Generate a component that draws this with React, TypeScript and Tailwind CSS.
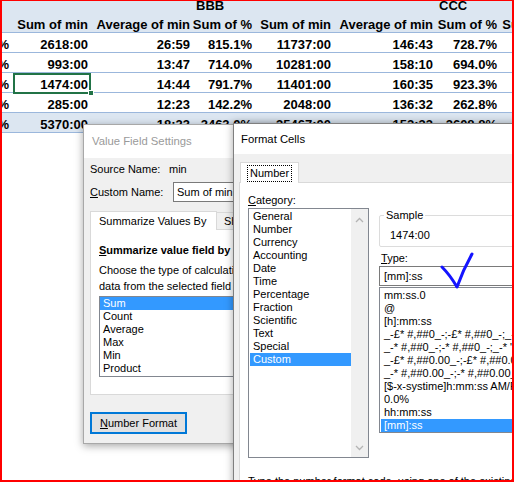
import React from "react";

// column widths of the pivot table, left to right
const cols = [
  "w-[12px]",
  "w-[79px]",
  "w-[102px]",
  "w-[62px]",
  "w-[79px]",
  "w-[102px]",
  "w-[64px]",
  "w-[76px]",
];

const heads = ["", "Sum of min", "Average of min", "Sum of %", "Sum of min", "Average of min", "Sum of %", "Sum of min"];

const rows = [
  ["%", "2618:00", "26:59", "815.1%", "11737:00", "146:43", "728.7%", ""],
  ["%", "993:00", "13:47", "714.0%", "10281:00", "158:10", "694.0%", ""],
  ["%", "1474:00", "14:44", "791.7%", "11401:00", "160:35", "923.3%", ""],
  ["%", "285:00", "12:23", "142.2%", "2048:00", "136:32", "262.8%", ""],
];

const total = ["%", "5370:00", "18:23", "2463.0%", "35467:00", "152:33", "2608.8%", ""];

const calcs = ["Sum", "Count", "Average", "Max", "Min", "Product"];

const categories = [
  "General",
  "Number",
  "Currency",
  "Accounting",
  "Date",
  "Time",
  "Percentage",
  "Fraction",
  "Scientific",
  "Text",
  "Special",
  "Custom",
];

const formats = [
  "mm:ss.0",
  "@",
  "[h]:mm:ss",
  '_-£* #,##0_-;-£* #,##0_-;_-£* "-"_-;_-@_-',
  '_-* #,##0_-;-* #,##0_-;_-* "-"_-;_-@_-',
  '_-£* #,##0.00_-;-£* #,##0.00_-;_-£* "-"??_-;_-@_-',
  '_-* #,##0.00_-;-* #,##0.00_-;_-* "-"??_-;_-@_-',
  "[$-x-systime]h:mm:ss AM/PM",
  "0.0%",
  "hh:mm:ss",
  "[mm]:ss",
];

const Row = ({ cells, selected }: { cells: string[]; selected?: boolean }) => (
  <div className="flex h-[20px] border-b border-[#9bb7dc]">
    {cells.map((c, i) => (
      <div
        key={i}
        className={`${cols[i]} shrink-0 flex items-end justify-end leading-[15px] pr-[3px] whitespace-nowrap ${
          i === 0 ? "pr-0" : ""
        } ${selected && i === 1 ? "relative" : ""}`}
      >
        {c}
        {selected && i === 1 && (
          <>
            <div className="absolute left-[1px] top-0 right-0 -bottom-[2px] border-2 border-[#217346]" />
            <div className="absolute -right-[3px] -bottom-[4px] w-[6px] h-[6px] bg-[#217346] border border-white" />
          </>
        )}
      </div>
    ))}
  </div>
);

const Sheet = () => (
  <div className="flex flex-col -mt-[4px] font-bold text-[13px] text-black">
    <div className="flex h-[20px] bg-[#dce6f1] items-end pb-[3px] leading-[15px]">
      <div className="w-[193px] shrink-0" />
      <div className="w-[243px] shrink-0 pl-[3px]">BBB</div>
      <div className="pl-[3px]">CCC</div>
    </div>
    <div className="flex h-[17px] bg-[#dce6f1] border-b border-[#9bb7dc]">
      {heads.map((h, i) => (
        <div
          key={i}
          className={`${cols[i]} shrink-0 flex items-end justify-end leading-[15px] pr-[3px] whitespace-nowrap`}
        >
          {h}
        </div>
      ))}
    </div>
    {rows.map((r, i) => (
      <Row key={i} cells={r} selected={i === 2} />
    ))}
    <div className="bg-[#dce6f1]">
      <Row cells={total} />
    </div>
  </div>
);

const ValueFieldSettings = () => (
  <div className="absolute left-[83px] top-[124px] w-[200px] h-[320px] border border-[#a8a8a8] bg-[#f0f0f0] shadow-[0_2px_8px_rgba(0,0,0,0.35)] flex flex-col">
    <div className="h-[33px] shrink-0 bg-white flex items-center pl-[8px] text-[11.3px] text-[#9a9a9a]">
      Value Field Settings
    </div>
    <div className="pl-[6px] flex flex-col">
      <div className="mt-[3px] h-[16px] leading-[16px] flex">
        <span className="w-[79px]">Source Name:</span>
        <span>min</span>
      </div>
      <div className="mt-[5px] h-[20px] flex items-center">
        <span className="w-[83px] shrink-0">
          <u>C</u>ustom Name:
        </span>
        <div className="flex-1 h-[20px] bg-white border border-[#7a7a7a] pl-[3px] leading-[18px] whitespace-nowrap">
          Sum of min
        </div>
      </div>
      <div className="mt-[9px] flex items-end">
        <div className="w-[127px] shrink-0 h-[19px] bg-white border border-[#d9d9d9] border-b-0 flex items-center pl-[8px] relative z-10 -mb-px whitespace-nowrap">
          Summarize Values By
        </div>
        <div className="h-[17px] shrink-0 bg-[#f0f0f0] border border-[#d9d9d9] border-b-0 border-l-0 pl-[7px] pr-[10px] flex items-center whitespace-nowrap">
          Show Values As
        </div>
      </div>
      <div className="h-[166px] bg-white border border-[#d9d9d9] pl-[8px] pt-[13px] whitespace-nowrap">
        <div className="font-bold leading-[14px]">
          <u>S</u>ummarize value field by
        </div>
        <div className="mt-[5px] leading-[16px]">
          Choose the type of calculation that you want to use to summarize
          <br />
          data from the selected field
        </div>
        <div className="mt-[2px] h-[81px] border border-[#828790] bg-white leading-[13px]">
          {calcs.map((c) => (
            <div
              key={c}
              className={`pl-[3px] h-[13px] ${c === "Sum" ? "bg-[#3399ff] text-white" : ""}`}
            >
              {c}
            </div>
          ))}
        </div>
      </div>
      <div className="mt-[17px] w-[97px] h-[22px] border-2 border-[#0078d7] bg-[#e1e1e1] flex items-center justify-center">
        <span>
          <u>N</u>umber Format
        </span>
      </div>
    </div>
  </div>
);

const Chevron = ({ down }: { down?: boolean }) => (
  <svg width="9" height="6" viewBox="0 0 9 6" className={down ? "rotate-180" : ""}>
    <path d="M1 5 L4.5 1.5 L8 5" fill="none" stroke="#b4b4b4" strokeWidth="1.3" />
  </svg>
);

const FormatCells = () => (
  <div className="absolute left-[233px] top-[123px] w-[300px] h-[380px] border border-[#7f7f7f] bg-[#f0f0f0] shadow-[0_0_8px_rgba(0,0,0,0.35)] flex flex-col">
    <div className="h-[30px] shrink-0 bg-white flex items-center pl-[7px] text-[11.3px] text-black">
      Format Cells
    </div>
    <div className="mt-[8px] pl-[6px] flex">
      <div className="h-[21px] w-[59px] bg-white border border-[#d9d9d9] border-b-0 -mb-px relative z-10 flex items-center justify-center">
        <span className="outline-1 outline-dotted outline-black px-[2px] leading-[15px]">Number</span>
      </div>
    </div>
    <div className="ml-[5px] flex-1 bg-white border border-[#d9d9d9] pl-[8px] pt-[10px] whitespace-nowrap">
      <div className="leading-[14px]">
        <u>C</u>ategory:
      </div>
      <div className="mt-[1px] flex items-start">
        <div className="w-[121px] h-[250px] shrink-0 border border-[#828790] flex">
          <div className="flex-1 pt-[1px] leading-[13px]">
            {categories.map((c) => (
              <div
                key={c}
                className={`ml-[1px] pl-[3px] h-[13px] ${c === "Custom" ? "bg-[#3399ff] text-white" : ""}`}
              >
                {c}
              </div>
            ))}
          </div>
          <div className="w-[17px] bg-[#f0f0f0] flex flex-col justify-between items-center pt-[8px] pb-[6px]">
            <Chevron />
            <Chevron down />
          </div>
        </div>
        <div className="ml-[10px] w-[200px] shrink-0">
          <fieldset className="border border-[#dcdcdc] rounded-[2px] pb-[4px]">
            <legend className="ml-[4px] px-[2px] leading-[14px]">Sample</legend>
            <div className="pt-[6px] pl-[10px] leading-[14px]">1474:00</div>
          </fieldset>
          <div className="mt-[4px] pl-[2px] leading-[14px]">
            <u>T</u>ype:
          </div>
          <div className="mt-[1px] h-[20px] border border-[#7a7a7a] pl-[4px] leading-[18px]">[mm]:ss</div>
          <div className="mt-[1px] h-[146px] border border-[#828790] pt-[1px] leading-[13px]">
            {formats.map((f) => (
              <div
                key={f}
                className={`ml-[1px] pl-[3px] h-[13px] ${f === "[mm]:ss" ? "bg-[#3399ff] text-white" : ""}`}
              >
                {f}
              </div>
            ))}
          </div>
        </div>
      </div>
      <div className="mt-[16px] leading-[14px]">
        Type the number format code, using one of the existing codes as a starting point.
      </div>
    </div>
  </div>
);

export default function App() {
  return (
    <div className="w-[515px] h-[483px] bg-white font-['Liberation_Sans',Arial,sans-serif]">
      <div className="relative w-[514px] h-[482px] overflow-hidden text-[11px] text-black">
        <Sheet />
        <ValueFieldSettings />
        <FormatCells />
        <svg
          className="absolute left-[436px] top-[250px] pointer-events-none"
          width="40"
          height="40"
          viewBox="0 0 40 40"
        >
          <path
            d="M6 17 Q14 25 21 37 Q27 20 36 4"
            fill="none"
            stroke="#1414ff"
            strokeWidth="3"
            strokeLinecap="round"
            strokeLinejoin="round"
          />
        </svg>
        <div className="absolute inset-0 border-t border-l-2 border-r-2 border-b-2 border-[#ff0000] pointer-events-none" />
      </div>
    </div>
  );
}
